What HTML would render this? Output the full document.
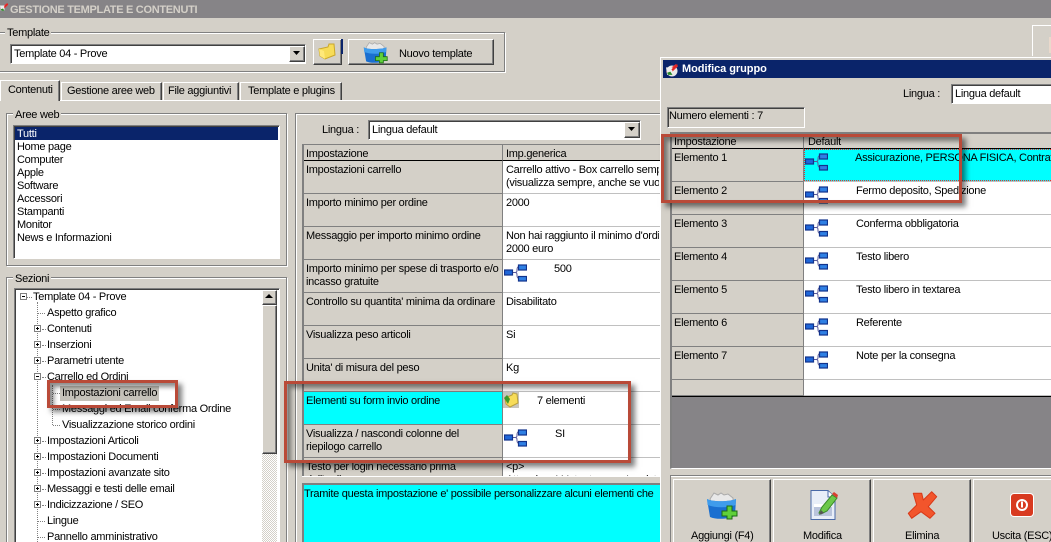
<!DOCTYPE html>
<html><head><meta charset="utf-8"><style>
html,body{margin:0;padding:0;width:1051px;height:542px;overflow:hidden}
body{position:relative;background:#d4d0c8;font:11px/13px "Liberation Sans",sans-serif;letter-spacing:-.27px;color:#000}
div,svg{position:absolute}
#root{left:0;top:0;width:1051px;height:542px;overflow:hidden;background:#d4d0c8}
.t{position:absolute;white-space:nowrap;line-height:13px;margin-top:1px}
.g{border:1px solid #808080;box-shadow:1px 1px 0 #fff,inset 1px 1px 0 #fff}
.l{background:#d4d0c8;padding:0 2px}
.s{background:#fff;border:1px solid #808080;border-right-color:#fff;border-bottom-color:#fff;box-shadow:inset 1px 1px 0 #404040}
.b{background:#d4d0c8;border-top:1px solid #fff;border-left:1px solid #fff;border-right:1px solid #404040;border-bottom:1px solid #404040;box-shadow:inset -1px -1px 0 #808080}
.lc{background:#d4d0c8;border-bottom:1px solid #808080;border-right:1px solid #808080;box-sizing:border-box}
.rc{background:#fff;border-bottom:1px solid #c0c0c0;box-sizing:border-box}
.r{border:3px solid #b94a38;box-sizing:border-box;box-shadow:4px 4px 5px rgba(0,0,0,.5),inset 4px 4px 5px rgba(0,0,0,.45)}
.h{border-top:1px dotted #808080;height:0;width:7px}
.v{border-left:1px dotted #808080;width:0}
.p{border:1px solid #808080;background:#fff;box-sizing:border-box;width:7px;height:7px;margin:1px 0 0 1px}
.p:before{content:"";position:absolute;left:1px;top:2px;width:3px;height:1px;background:#000}
.p.x:after{content:"";position:absolute;left:2px;top:1px;width:1px;height:3px;background:#000}
.tab{background:#d4d0c8;border-top:1px solid #fff;border-left:1px solid #fff;border-right:1px solid #404040;box-shadow:inset -1px 0 0 #808080;box-sizing:border-box}
</style></head><body>
<svg width="0" height="0" style="position:absolute"><defs>
<symbol id="tree" viewBox="0 0 23 18"><path d="M9 9h2c2 0 2-1 2-3s1-3 2-3M11 9c2 0 2 1 2 3s1 3 2 3" fill="none" stroke="#5a5a9a"/><rect x=".5" y="6.500" width="8" height="5" fill="#1f66d8" stroke="#12338c" stroke-width="1.200"/><rect x="14.500" y="1.500" width="8" height="5" fill="#2f80e4" stroke="#12338c" stroke-width="1.200"/><rect x="14.500" y="13" width="8" height="4.500" fill="#2f80e4" stroke="#12338c" stroke-width="1.200"/></symbol>
<symbol id="fadd" viewBox="0 0 32 30"><path d="M4 9l4-6 4 2 3-2 3 2 4-1 5 4v6H6z" fill="#e8e8e8" stroke="#aaa"/><path d="M1 9c5 3 22 3 29 0l-1 17c-7 3-18 4-25 1z" fill="#1a6fd0"/><path d="M1 9c5 3 22 3 29 0l-.4 6c-8 3-20 3-28 0z" fill="#3f9cec"/><path d="M21 17h5v5h5v5h-5v3h-5v-3h-5v-5h5z" transform="translate(0 -1)" fill="#5fd03a" stroke="#1d6a12"/></symbol>
<symbol id="cart" viewBox="0 0 12 12"><path d="M0 8L9 1l2 2-8 8z" fill="#e33"/><path d="M0 4h6v7H1z" fill="#eee"/><path d="M1 9l3-1 2 3H2z" fill="#2a8a2a"/><path d="M5 6l5-5 1 1-5 5z" fill="#d22"/></symbol>
</defs></svg>
<div id="root">
<div style="left:0;top:0;width:1051px;height:18px;background:#868487"></div>
<svg style="left:0;top:0" width="9" height="14"><use href="#cart" width="9" height="14"/></svg>
<div class="t" style="left:10px;top:3px;color:#d4d0c8;font-weight:bold;letter-spacing:-.3px">GESTIONE TEMPLATE E CONTENUTI</div>

<div class="g" style="left:-3px;top:32px;width:506px;height:38px"></div>
<div class="t l" style="left:5px;top:26px">Template</div>
<div class="s" style="left:10px;top:44px;width:294px;height:18px"></div>
<div class="t" style="left:14px;top:47px">Template 04 - Prove</div>
<div class="b" style="left:289px;top:46px;width:14px;height:14px"></div>
<svg style="left:293px;top:51px" width="8" height="5"><path d="M0 0h7L3.500 4z"/></svg>
<div class="b" style="left:313px;top:39px;width:27px;height:24px"></div>
<div style="left:341px;top:39px;width:2px;height:15px;background:#0a246a"></div>
<svg style="left:318px;top:43px" width="18" height="17"><path d="M1 6l9-2 1-3 5 0 1 11-10 4-5-3z" fill="#f7dc58" stroke="#c9a62a"/><path d="M1 6l5 2 1 8-5-3z" fill="#ffe97a"/></svg>
<div class="b" style="left:348px;top:39px;width:144px;height:24px"></div>
<svg style="left:363px;top:40px" width="25" height="24"><use href="#fadd" width="25" height="24"/></svg>
<div class="t" style="left:399px;top:47px">Nuovo template</div>

<div style="left:0;top:100px;width:660px;height:1px;background:#fff"></div>
<div class="tab" style="left:0;top:80px;width:60px;height:21px"></div>
<div class="t" style="left:8px;top:83px">Contenuti</div>
<div class="tab" style="left:61px;top:82px;width:101px;height:18px"></div>
<div class="t" style="left:67px;top:84px">Gestione aree web</div>
<div class="tab" style="left:163px;top:82px;width:76px;height:18px"></div>
<div class="t" style="left:168px;top:84px">File aggiuntivi</div>
<div class="tab" style="left:240px;top:82px;width:102px;height:18px"></div>
<div class="t" style="left:248px;top:84px">Template e plugins</div>

<div class="g" style="left:6px;top:113px;width:279px;height:151px"></div>
<div class="t l" style="left:13px;top:108px">Aree web</div>
<div class="s" style="left:13px;top:125px;width:265px;height:132px"></div>
<div style="left:15px;top:127px;width:263px;height:13px;background:#0a246a"></div>
<div class="t" style="left:17px;top:127px;color:#fff">Tutti</div>
<div class="t" style="left:17px;top:140px">Home page</div>
<div class="t" style="left:17px;top:153px">Computer</div>
<div class="t" style="left:17px;top:166px">Apple</div>
<div class="t" style="left:17px;top:179px">Software</div>
<div class="t" style="left:17px;top:192px">Accessori</div>
<div class="t" style="left:17px;top:205px">Stampanti</div>
<div class="t" style="left:17px;top:218px">Monitor</div>
<div class="t" style="left:17px;top:231px">News e Informazioni</div>

<div class="g" style="left:6px;top:277px;width:279px;height:280px"></div>
<div class="t l" style="left:13px;top:272px">Sezioni</div>
<div class="s" style="left:14px;top:288px;width:264px;height:270px"></div>
<div style="left:262px;top:290px;width:15px;height:252px;background:repeating-conic-gradient(#fff 0 25%,#d4d0c8 0 50%) 0 0/2px 2px"></div>
<div class="b" style="left:262px;top:290px;width:13px;height:13px"></div>
<svg style="left:265px;top:294px" width="9" height="5"><path d="M4 0l4 4H0z"/></svg>
<div class="b" style="left:262px;top:305px;width:13px;height:147px"></div>
<div class="v" style="left:37px;top:302px;height:240px"></div>
<div class="v" style="left:52px;top:385px;height:40px"></div>
<div class="p" style="left:19px;top:292px"></div><div class="h" style="left:27px;top:297px;width:5px"></div>
<div class="t" style="left:33px;top:290px">Template 04 - Prove</div>
<div class="h" style="left:38px;top:313px"></div><div class="t" style="left:47px;top:306px">Aspetto grafico</div>
<div class="p x" style="left:33px;top:324px"></div><div class="h" style="left:42px;top:329px;width:4px"></div><div class="t" style="left:47px;top:322px">Contenuti</div>
<div class="p x" style="left:33px;top:340px"></div><div class="h" style="left:42px;top:345px;width:4px"></div><div class="t" style="left:47px;top:338px">Inserzioni</div>
<div class="p x" style="left:33px;top:356px"></div><div class="h" style="left:42px;top:361px;width:4px"></div><div class="t" style="left:47px;top:354px">Parametri utente</div>
<div class="p" style="left:33px;top:372px"></div><div class="h" style="left:42px;top:377px;width:4px"></div><div class="t" style="left:47px;top:370px">Carrello ed Ordini</div>
<div style="left:60px;top:386px;width:99px;height:15px;background:#c4c1b9"></div>
<div class="h" style="left:53px;top:393px"></div><div class="t" style="left:62px;top:386px">Impostazioni carrello</div>
<div class="h" style="left:53px;top:409px"></div><div class="t" style="left:62px;top:402px">Messaggi ed Email conferma Ordine</div>
<div class="h" style="left:53px;top:425px"></div><div class="t" style="left:62px;top:418px">Visualizzazione storico ordini</div>
<div class="p x" style="left:33px;top:436px"></div><div class="h" style="left:42px;top:441px;width:4px"></div><div class="t" style="left:47px;top:434px">Impostazioni Articoli</div>
<div class="p x" style="left:33px;top:452px"></div><div class="h" style="left:42px;top:457px;width:4px"></div><div class="t" style="left:47px;top:450px">Impostazioni Documenti</div>
<div class="p x" style="left:33px;top:468px"></div><div class="h" style="left:42px;top:473px;width:4px"></div><div class="t" style="left:47px;top:466px">Impostazioni avanzate sito</div>
<div class="p x" style="left:33px;top:484px"></div><div class="h" style="left:42px;top:489px;width:4px"></div><div class="t" style="left:47px;top:482px">Messaggi e testi delle email</div>
<div class="p x" style="left:33px;top:500px"></div><div class="h" style="left:42px;top:505px;width:4px"></div><div class="t" style="left:47px;top:498px">Indicizzazione / SEO</div>
<div class="h" style="left:38px;top:521px"></div><div class="t" style="left:47px;top:514px">Lingue</div>
<div class="h" style="left:38px;top:537px"></div><div class="t" style="left:47px;top:530px">Pannello amministrativo</div>

<div class="g" style="left:295px;top:113px;width:380px;height:450px"></div>
<div class="t" style="left:322px;top:123px">Lingua :</div>
<div class="s" style="left:368px;top:120px;width:271px;height:18px"></div>
<div class="t" style="left:372px;top:123px">Lingua default</div>
<div class="b" style="left:624px;top:122px;width:14px;height:14px"></div>
<svg style="left:628px;top:127px" width="8" height="5"><path d="M0 0h7L3.500 4z"/></svg>

<div style="left:302px;top:144px;width:358px;height:333px;background:#fff;border-top:2px solid #808080;border-left:2px solid #808080;box-sizing:border-box;overflow:hidden"></div>
<div class="lc" style="left:304px;top:145px;width:199px;height:16px;border-bottom:1px solid #000"></div>
<div class="rc" style="left:503px;top:145px;width:157px;height:16px;background:#d4d0c8;border-bottom:1px solid #000"></div>
<div class="t" style="left:306px;top:147px">Impostazione</div>
<div class="t" style="left:506px;top:147px">Imp.generica</div>

<div class="lc" style="left:304px;top:161px;width:199px;height:33px"></div><div class="rc" style="left:503px;top:161px;width:157px;height:33px"></div>
<div class="t" style="left:306px;top:163px">Impostazioni carrello</div>
<div class="t" style="left:506px;top:163px;width:153px;overflow:hidden">Carrello attivo - Box carrello sempre</div>
<div class="t" style="left:506px;top:176px;width:153px;overflow:hidden">(visualizza sempre, anche se vuoto)</div>

<div class="lc" style="left:304px;top:194px;width:199px;height:33px"></div><div class="rc" style="left:503px;top:194px;width:157px;height:33px"></div>
<div class="t" style="left:306px;top:196px">Importo minimo per ordine</div>
<div class="t" style="left:506px;top:196px">2000</div>

<div class="lc" style="left:304px;top:227px;width:199px;height:33px"></div><div class="rc" style="left:503px;top:227px;width:157px;height:33px"></div>
<div class="t" style="left:306px;top:229px">Messaggio per importo minimo ordine</div>
<div class="t" style="left:506px;top:229px;width:153px;overflow:hidden">Non hai raggiunto il minimo d'ordine di</div>
<div class="t" style="left:506px;top:242px">2000 euro</div>

<div class="lc" style="left:304px;top:260px;width:199px;height:33px"></div><div class="rc" style="left:503px;top:260px;width:157px;height:33px"></div>
<div class="t" style="left:306px;top:262px">Importo minimo per spese di trasporto e/o</div>
<div class="t" style="left:306px;top:275px">incasso gratuite</div>
<svg style="left:504px;top:263px" width="23" height="19"><use href="#tree" width="23" height="19"/></svg>
<div class="t" style="left:554px;top:262px">500</div>

<div class="lc" style="left:304px;top:293px;width:199px;height:33px"></div><div class="rc" style="left:503px;top:293px;width:157px;height:33px"></div>
<div class="t" style="left:306px;top:295px">Controllo su quantita' minima da ordinare</div>
<div class="t" style="left:506px;top:295px">Disabilitato</div>

<div class="lc" style="left:304px;top:326px;width:199px;height:33px"></div><div class="rc" style="left:503px;top:326px;width:157px;height:33px"></div>
<div class="t" style="left:306px;top:328px">Visualizza peso articoli</div>
<div class="t" style="left:506px;top:328px">Si</div>

<div class="lc" style="left:304px;top:359px;width:199px;height:33px"></div><div class="rc" style="left:503px;top:359px;width:157px;height:33px"></div>
<div class="t" style="left:306px;top:361px">Unita' di misura del peso</div>
<div class="t" style="left:506px;top:361px">Kg</div>

<div class="lc" style="left:304px;top:392px;width:199px;height:33px;background:#0ff"></div><div class="rc" style="left:503px;top:392px;width:157px;height:33px"></div>
<div class="t" style="left:306px;top:394px">Elementi su form invio ordine</div>
<div style="left:503px;top:392px;width:16px;height:16px;background:#c8c5bd"></div>
<svg style="left:503px;top:392px" width="16" height="16"><path d="M2 6l7-3 1-2 4 1 1 9-8 4-4-3z" fill="#f7dc58" stroke="#b9a03a"/><path d="M1 6l3-3 3 4-2 5z" fill="#3f9a2a"/></svg>
<div class="t" style="left:537px;top:394px">7 elementi</div>

<div class="lc" style="left:304px;top:425px;width:199px;height:33px"></div><div class="rc" style="left:503px;top:425px;width:157px;height:33px"></div>
<div class="t" style="left:306px;top:427px">Visualizza / nascondi colonne del</div>
<div class="t" style="left:306px;top:440px">riepilogo carrello</div>
<svg style="left:504px;top:428px" width="23" height="19"><use href="#tree" width="23" height="19"/></svg>
<div class="t" style="left:555px;top:427px">SI</div>

<div style="left:304px;top:458px;width:356px;height:18px;overflow:hidden">
<div class="lc" style="left:0;top:0;width:199px;height:33px"></div>
<div class="t" style="left:2px;top:2px">Testo per login necessario prima</div>
<div class="t" style="left:2px;top:15px">dell'ordine</div>
<div class="t" style="left:202px;top:2px">&lt;p&gt;</div>
<div class="t" style="left:202px;top:15px">Attenzione! L'utente non e' registrato</div>
</div>
<div style="left:302px;top:476px;width:358px;height:1px;background:#fff"></div>

<div style="left:302px;top:483px;width:358px;height:59px;background:#0ff;border-top:2px solid #808080;border-left:2px solid #808080;box-sizing:border-box"></div>
<div class="t" style="left:304px;top:487px;width:356px;overflow:hidden">Tramite questa impostazione e' possibile personalizzare alcuni elementi che</div>

<div class="r" style="left:47px;top:380px;width:131px;height:28px"></div>
<div class="r" style="left:284px;top:381px;width:347px;height:82px"></div>

<div style="left:1032px;top:25px;width:19px;height:31px;border-left:1px solid #fff;border-top:1px solid #fff;box-sizing:border-box"></div>
<div style="left:1049px;top:37px;width:2px;height:16px;background:#ead9cc"></div>

<div style="left:660px;top:57px;width:391px;height:485px;background:#d4d0c8;border-left:1px solid #fff;border-top:1px solid #fff;box-sizing:border-box"></div>
<div style="left:663px;top:60px;width:388px;height:18px;background:#0a246a"></div>
<svg style="left:665px;top:62px" width="15" height="15"><circle cx="7" cy="9" r="5.500" fill="#e8e8e8"/><use href="#cart" x="1" y="1" width="13" height="13"/></svg>
<div class="t" style="left:682px;top:62px;color:#fff;font-weight:bold;letter-spacing:-.05px">Modifica gruppo</div>

<div class="t" style="left:903px;top:87px">Lingua :</div>
<div class="s" style="left:951px;top:84px;width:110px;height:18px"></div>
<div class="t" style="left:955px;top:87px">Lingua default</div>

<div class="s" style="left:667px;top:107px;width:136px;height:19px;background:#d4d0c8"></div>
<div class="t" style="left:669px;top:109px">Numero elementi : 7</div>

<div style="left:670px;top:132px;width:381px;height:337px;background:#868487;border-top:2px solid #808080;border-left:2px solid #808080;border-bottom:1px solid #fff;box-sizing:border-box"></div>
<div class="lc" style="left:672px;top:134px;width:132px;height:15px;border-bottom:1px solid #000"></div>
<div class="rc" style="left:804px;top:134px;width:247px;height:15px;background:#d4d0c8;border-bottom:1px solid #000"></div>
<div class="t" style="left:674px;top:135px">Impostazione</div>
<div class="t" style="left:808px;top:135px">Default</div>

<div class="lc" style="left:672px;top:149px;width:132px;height:33px"></div>
<div class="rc" style="left:804px;top:149px;width:247px;height:32px;background:#0ff;border:1px dotted #e03030;border-right:0"></div>
<div class="rc" style="left:804px;top:181px;width:247px;height:1px"></div>
<div class="t" style="left:674px;top:151px">Elemento 1</div>
<svg style="left:805px;top:152px" width="23" height="19"><use href="#tree" width="23" height="19"/></svg>
<div class="t" style="left:855px;top:151px">Assicurazione, PERSONA FISICA, Contratto</div>

<div class="lc" style="left:672px;top:182px;width:132px;height:33px"></div><div class="rc" style="left:804px;top:182px;width:247px;height:33px"></div>
<div class="t" style="left:674px;top:184px">Elemento 2</div>
<svg style="left:805px;top:185px" width="23" height="19"><use href="#tree" width="23" height="19"/></svg>
<div class="t" style="left:856px;top:184px">Fermo deposito, Spedizione</div>

<div class="lc" style="left:672px;top:215px;width:132px;height:33px"></div><div class="rc" style="left:804px;top:215px;width:247px;height:33px"></div>
<div class="t" style="left:674px;top:217px">Elemento 3</div>
<svg style="left:805px;top:218px" width="23" height="19"><use href="#tree" width="23" height="19"/></svg>
<div class="t" style="left:856px;top:217px">Conferma obbligatoria</div>

<div class="lc" style="left:672px;top:248px;width:132px;height:33px"></div><div class="rc" style="left:804px;top:248px;width:247px;height:33px"></div>
<div class="t" style="left:674px;top:250px">Elemento 4</div>
<svg style="left:805px;top:251px" width="23" height="19"><use href="#tree" width="23" height="19"/></svg>
<div class="t" style="left:856px;top:250px">Testo libero</div>

<div class="lc" style="left:672px;top:281px;width:132px;height:33px"></div><div class="rc" style="left:804px;top:281px;width:247px;height:33px"></div>
<div class="t" style="left:674px;top:283px">Elemento 5</div>
<svg style="left:805px;top:284px" width="23" height="19"><use href="#tree" width="23" height="19"/></svg>
<div class="t" style="left:856px;top:283px">Testo libero in textarea</div>

<div class="lc" style="left:672px;top:314px;width:132px;height:33px"></div><div class="rc" style="left:804px;top:314px;width:247px;height:33px"></div>
<div class="t" style="left:674px;top:316px">Elemento 6</div>
<svg style="left:805px;top:317px" width="23" height="19"><use href="#tree" width="23" height="19"/></svg>
<div class="t" style="left:856px;top:316px">Referente</div>

<div class="lc" style="left:672px;top:347px;width:132px;height:33px"></div><div class="rc" style="left:804px;top:347px;width:247px;height:33px"></div>
<div class="t" style="left:674px;top:349px">Elemento 7</div>
<svg style="left:805px;top:350px" width="23" height="19"><use href="#tree" width="23" height="19"/></svg>
<div class="t" style="left:856px;top:349px">Note per la consegna</div>

<div class="lc" style="left:672px;top:380px;width:132px;height:16px"></div><div class="rc" style="left:804px;top:380px;width:247px;height:16px"></div>
<div style="left:672px;top:396px;width:379px;height:1px;background:#000"></div>

<div style="left:670px;top:475px;width:381px;height:1px;background:#808080"></div>
<div style="left:670px;top:476px;width:381px;height:1px;background:#fff"></div>
<div style="left:670px;top:475px;width:1px;height:67px;background:#808080"></div>

<div class="b" style="left:673px;top:479px;width:96px;height:70px"></div>
<div class="b" style="left:773px;top:479px;width:96px;height:70px"></div>
<div class="b" style="left:873px;top:479px;width:96px;height:70px"></div>
<div class="b" style="left:973px;top:479px;width:96px;height:70px"></div>

<svg style="left:706px;top:490px" width="32" height="30"><use href="#fadd" width="32" height="30"/></svg>
<div class="t" style="left:691px;top:529px">Aggiungi (F4)</div>

<svg style="left:810px;top:490px" width="28" height="31"><path d="M1 .5h17l7 7v22H1z" fill="#e8eef8" stroke="#4a6aa8"/><path d="M18 1v6h7" fill="#fff" stroke="#4a6aa8"/><path d="M4 14h18v12H4z" fill="#b9c4dc"/><path d="M4 14h18v3H4z" fill="#fff"/><path d="M9 23l3-6L22 5l5 3-10 13-6 3z" fill="#6cc84a" stroke="#3a8a2a"/><path d="M22 4l2-2 4 3-1 3z" fill="#d84030"/><path d="M9 25l2-5 3 3z" fill="#555"/></svg>
<div class="t" style="left:803px;top:529px">Modifica</div>

<svg style="left:907px;top:490px" width="31" height="30"><path d="M6.300 3.300H14.700L16.300 10 24.700 1.700 29.700 6.700 21.300 16.700 28 23.300 23 28.300 14 21.700 4.700 28.300 1.300 23.300 9.700 15z" fill="#f2552c" stroke="#d83818" stroke-linejoin="round"/></svg>
<div class="t" style="left:905px;top:529px">Elimina</div>

<div style="left:1011px;top:494px;width:22px;height:22px;background:#d83a20;border-radius:3px;box-shadow:0 0 0 1px #fff"></div>
<svg style="left:1014px;top:497px" width="16" height="16"><circle cx="8" cy="8" r="5" fill="none" stroke="#fff" stroke-width="2"/><path d="M8 4.500v6" stroke="#fff" stroke-width="2"/></svg>
<div class="t" style="left:992px;top:529px">Uscita (ESC)</div>

<div class="r" style="left:661px;top:134px;width:301px;height:69px"></div>
</div>
</body></html>
